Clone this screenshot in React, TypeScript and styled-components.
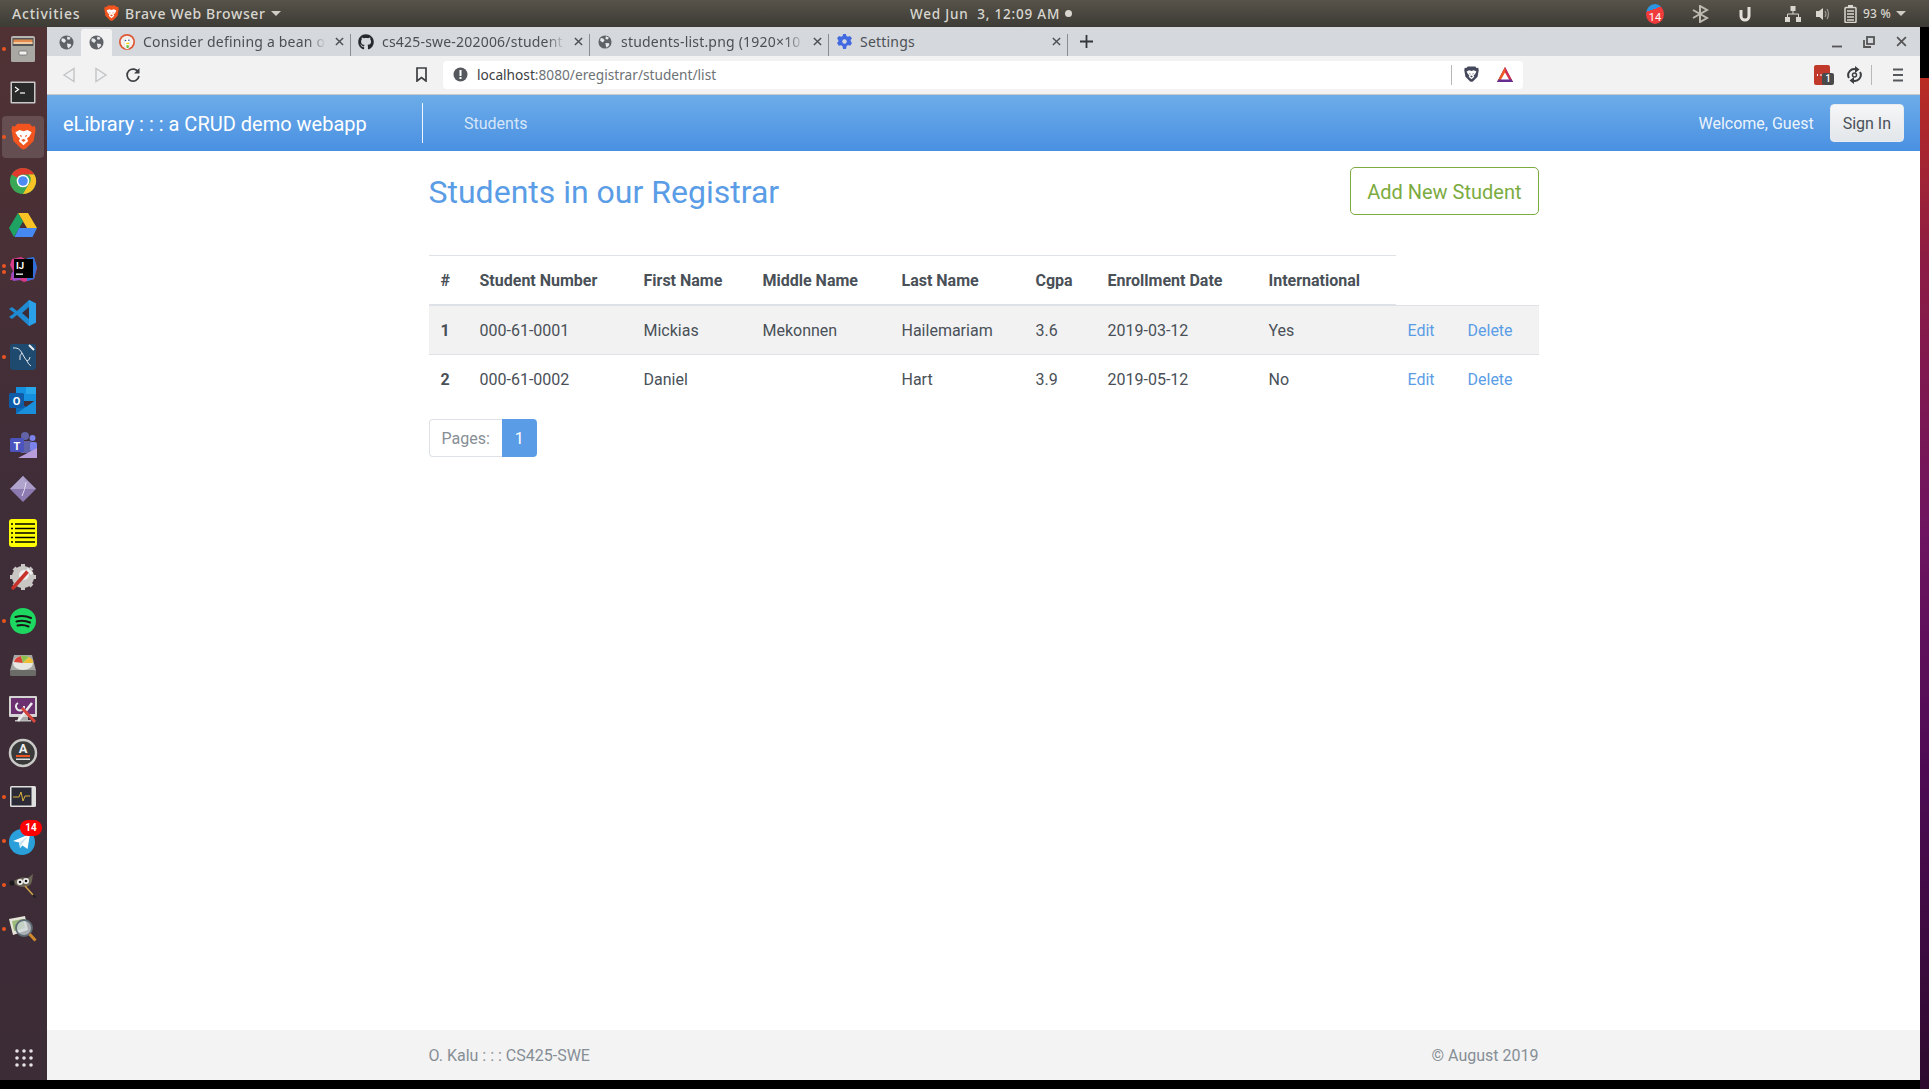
import React from "react";
import styled, { createGlobalStyle } from "styled-components";
import { FaGithub } from "react-icons/fa";

const Global = createGlobalStyle`
  html, body { margin: 0; padding: 0; height: 100%; background: #000; overflow: hidden; }
  #root { height: 100%; }
  * { box-sizing: border-box; }
`;

const ui = `"Noto Sans", "Open Sans", "DejaVu Sans", sans-serif`;
const web = `Roboto, "Liberation Sans", sans-serif`;

const Screen = styled.div`
  width: 1929px; height: 1089px; display: flex; flex-direction: column; background: #000;
`;
const TopBar = styled.header`
  height: 27px; flex: none; display: flex; align-items: center; position: relative;
  background: linear-gradient(#57534a, #3c3b35);
  font: 500 14px ${ui}; color: #d9d6cf; white-space: pre;
`;
const Activities = styled.span`
  margin-left: 12px; width: 92px; letter-spacing: .8px;
`;
const AppMenu = styled.div`
  display: flex; align-items: center; gap: 6px; width: 173px; flex: none; letter-spacing: .6px;
  svg { flex: none; }
`;
const Caret = styled.i<{ $gap?: number }>`
  width: 0; height: 0; flex: none; border-left: 5px solid transparent; border-right: 5px solid transparent;
  border-top: 5px solid #cfccc5; display: block; margin-left: ${p => p.$gap ?? 0}px;
`;
const Clock = styled.div`
  display: flex; align-items: center; gap: 5px; margin-left: 633px; font-size: 13.5px;
  letter-spacing: .8px;
`;
const StatusDot = styled.i`
  width: 7px; height: 7px; border-radius: 50%; background: #d9d6cf; display: block;
`;
const Tray = styled.div`
  display: flex; align-items: center; margin-left: auto; padding-right: 23px;
`;
const TrayCell = styled.span<{ $w: number }>`
  width: ${p => p.$w}px; display: flex; justify-content: center; align-items: center;
`;
const Battery = styled.span`
  font-size: 12px; width: 34px; letter-spacing: .2px; white-space: nowrap; padding-left: 4px;
`;
const TrayBadge = styled.span`
  width: 18px; height: 20px; display: flex; align-items: flex-end; justify-content: center;
  border-radius: 50%; background: linear-gradient(160deg, #2b95e0 30%, #ef3b3b 30%);
  color: #fff; font: 400 11px ${web};
`;

const Below = styled.div`
  flex: 1; min-height: 0; display: flex;
`;
const LeftColumn = styled.div`
  flex: 1; min-width: 0; display: flex; flex-direction: column;
`;
const Desktop = styled.div`
  flex: 1; min-height: 0; display: flex;
`;
const Band = styled.div`
  height: 9px; flex: none; background: #000;
`;
const Strip = styled.div`
  width: 9px; flex: none; display: flex; flex-direction: column;
`;
const StripBlack = styled.div`
  height: 51px; background: #000;
`;
const Wallpaper = styled.div`
  flex: 1; background: linear-gradient(#b92c23 0%, #8c1c44 18%, #6e1460 45%, #4e0b54 68%, #2e0a2e 100%);
`;

const Dock = styled.nav`
  width: 47px; flex: none; display: flex; flex-direction: column;
  background: linear-gradient(#503234, #3f2d38 45%, #3c2c36);
`;
const DockItem = styled.div<{ $active?: boolean }>`
  height: 44px; flex: none; position: relative; display: flex; align-items: center; justify-content: center;
  padding-right: 1px;
  &::before {
    content: ""; position: absolute; left: 2px; right: 3px; top: 1px; bottom: 1px; border-radius: 4px;
    background: ${p => (p.$active ? "rgba(255,255,255,.14)" : "transparent")};
  }
  svg { position: relative; }
`;
const Pips = styled.div`
  position: absolute; left: 2px; top: 0; bottom: 0; display: flex; flex-direction: column;
  justify-content: center; gap: 2px;
  i { width: 4px; height: 4px; border-radius: 50%; background: #e95420; display: block; }
`;
const DockBadge = styled.span`
  position: absolute; top: 1px; left: 20px; width: 22px; height: 16px; border-radius: 8px; background: #f00;
  color: #fff; font: 700 10px/16px ${web}; text-align: center;
`;
const AppsButton = styled.div`
  margin-top: auto; height: 44px; flex: none; display: flex; align-items: center; justify-content: center;
`;

const Browser = styled.div`
  flex: 1; min-width: 0; display: flex; flex-direction: column; background: #fff;
`;
const TabStrip = styled.div`
  height: 29px; flex: none; background: #d5d8dc; display: flex; align-items: stretch;
`;
const PinnedTab = styled.div<{ $active?: boolean }>`
  width: ${p => (p.$active ? 31 : 34)}px; display: flex; align-items: center; justify-content: center;
  padding-left: ${p => (p.$active ? 0 : 4)}px;
  background: ${p => (p.$active ? "#f2f2f2" : "transparent")};
  border-radius: 3px 3px 0 0; margin-top: 2px;
`;
const Tab = styled.div`
  width: 239px; display: flex; align-items: center; padding: 0 5px 0 6px; position: relative;
  font: 400 14px ${ui}; color: #4b5056; letter-spacing: .2px;
  &::after { content: ""; position: absolute; right: 0; top: 7px; bottom: 0; width: 1px; background: #8a8d91; }
`;
const TabIcon = styled.span`
  width: 18px; height: 18px; display: flex; align-items: center; justify-content: center; flex: none;
`;
const TabTitle = styled.span`
  margin-left: 7px; flex: 1; white-space: nowrap;
  -webkit-mask-image: linear-gradient(90deg, #000 90%, transparent 100%);
  mask-image: linear-gradient(90deg, #000 90%, transparent 100%);
`;
const PlainTitle = styled.span`
  margin-left: 7px; flex: 1; white-space: nowrap;
`;
const CloseGlyph = styled.span`
  width: 14px; display: flex; justify-content: center; margin-left: 6px; margin-right: 0;
`;
const NewTab = styled.div`
  width: 36px; display: flex; align-items: center; justify-content: center;
`;
const WindowControls = styled.div`
  margin-left: auto; display: flex; align-items: center; padding-right: 3px;
`;
const WindowBtn = styled.span`
  width: 32px; display: flex; justify-content: center;
`;

const Toolbar = styled.div`
  height: 39px; flex: none; background: #f2f2f2; border-bottom: 1px solid #c9c9c9; display: flex;
  align-items: center; padding-bottom: 1px;
`;
const ToolBtn = styled.span<{ $w?: number }>`
  width: ${p => p.$w ?? 32}px; display: flex; justify-content: center; flex: none;
`;
const Lead = styled.span`
  width: 6px; flex: none;
`;
const ToolSpacer = styled.span`
  width: 261px; flex: none;
`;
const AddressBar = styled.div`
  width: 1080px; height: 28px; margin-left: 11px; background: #fff; border-radius: 4px; display: flex; align-items: center;
  padding: 0 3px 0 10px; font: 400 13.7px ${ui}; color: #3c4043; flex: none;
`;
const Host = styled.span`
  margin-left: 9px; color: #3c4043;
`;
const Muted = styled.span`
  color: #6d7276;
`;
const AddressEnd = styled.div`
  margin-left: auto; display: flex; align-items: center;
`;
const VRule = styled.span<{ $after?: number }>`
  width: 1px; height: 20px; background: #b8b8b8; display: block; margin-right: ${p => p.$after ?? 0}px;
`;
const ExtArea = styled.div`
  margin-left: auto; display: flex; align-items: center; padding-right: 1px;
`;
const ExtBadgeWrap = styled.span`
  position: relative; width: 33px; display: flex; justify-content: center;
`;
const ExtCount = styled.span`
  position: absolute; left: 17px; top: 8px; width: 12px; height: 12px; border-radius: 2px;
  background: #4a4a4a; color: #fff; font: 500 10px/12px ${web}; text-align: center;
`;

const NavBar = styled.div`
  height: 56px; flex: none; display: flex; align-items: center; padding: 0 16px;
  background: linear-gradient(#6cace9, #4a90e2); font-family: ${web};
`;
const Brand = styled.span`
  font-size: 20px; color: #fff; width: 359px; white-space: nowrap; padding-top: 2px;
`;
const NavDivider = styled.span`
  width: 1px; height: 40px; background: rgba(255,255,255,.9); display: block;
`;
const NavLink = styled.span`
  margin-left: 41px; font-size: 16px; color: rgba(255,255,255,.75);
`;
const Welcome = styled.span`
  margin-left: auto; font-size: 16px; color: rgba(255,255,255,.9);
`;
const SignIn = styled.span`
  margin-left: 16px; height: 38px; padding: 0 12px; display: flex; align-items: center; font-size: 16px;
  color: #495057; border-radius: 4px; border: 1px solid #e9ecef;
  background: linear-gradient(#f5f6f7, #e3e6ea);
`;

const Main = styled.main`
  flex: 1; min-height: 0; font-family: ${web}; color: #495057; font-size: 16px;
`;
const Container = styled.div`
  width: 1110px; margin: 0 0 0 381.5px;
`;
const TitleRow = styled.div`
  display: flex; align-items: center; justify-content: space-between; padding-top: 16px; margin-bottom: 40px;
`;
const Title = styled.h1`
  margin: 0; padding-top: 2px; font: 400 32px/1.2 ${web}; color: #5a9de6;
`;
const AddButton = styled.span`
  height: 48px; padding: 2px 16px 0; display: flex; align-items: center; border: 1px solid #7cab3f; border-radius: 5px;
  color: #7cab3f; font-size: 20px;
`;
const Table = styled.table`
  width: 1110px; table-layout: fixed; border-collapse: collapse; margin-bottom: 16px;
`;
const Th = styled.th`
  padding: 13px 12px 11px; border-top: 1px solid #dee2e6; border-bottom: 2px solid #dee2e6; text-align: left;
  font-weight: 700; line-height: 24px;
`;
const Row = styled.tr<{ $shaded?: boolean }>`
  background: ${p => (p.$shaded ? "#f2f2f3" : "transparent")};
`;
const Td = styled.td`
  padding: 13px 12px 11px; border-top: 1px solid #dee2e6; line-height: 24px; white-space: nowrap;
`;
const RowHead = styled(Td)`
  font-weight: 700;
`;
const ActionLink = styled.a`
  color: #5a9de6; text-decoration: none;
`;
const Pager = styled.div`
  display: flex; height: 38px;
`;
const PagerLabel = styled.span`
  padding: 0 12px; display: flex; align-items: center; color: #868e96; border: 1px solid #dee2e6;
  border-right: 0; border-radius: 4px 0 0 4px;
`;
const PagerCurrent = styled.span`
  width: 35px; display: flex; align-items: center; justify-content: center; color: #fff; background: #5a9de6; border-radius: 0 4px 4px 0;
`;
const Footer = styled.footer`
  height: 50px; flex: none; background: #f3f3f3; font: 400 16px ${web}; color: #868e96; display: flex; align-items: center;
`;
const FooterInner = styled(Container)`
  display: flex; justify-content: space-between;
`;

/* ---------- drawings ---------- */
const Globe = ({ c = "#5f6368", s = 15 }: { c?: string; s?: number }) => (
  <svg width={s} height={s} viewBox="0 0 16 16">
    <circle cx="8" cy="8" r="7.5" fill={c} />
    <path d="M3 3.5l3 .5 1.5 2-2 2.5-3-2zM9 1.5l3.5 1.5-1.5 2-2.5-.5zM8.5 9l4 .5.5 2-3 3-1-2z" fill="#e9eaec" />
  </svg>
);
const X = ({ c = "#4b5056", s = 9, w = 1.6 }: { c?: string; s?: number; w?: number }) => (
  <svg width={s} height={s} viewBox="0 0 10 10"><path d="M1 1l8 8M9 1L1 9" stroke={c} strokeWidth={w} fill="none" /></svg>
);
const Duck = () => (
  <svg width="16" height="16" viewBox="0 0 16 16">
    <circle cx="8" cy="8" r="8" fill="#de5833" /><circle cx="8" cy="8" r="6.3" fill="#f4f1ee" />
    <path d="M5 5q3-2.5 5.500 0l.5 3-1.500 7h-3L5.500 9z" fill="#fff" stroke="#c9c9c9" strokeWidth=".4" />
    <circle cx="6.500" cy="6.500" r=".8" fill="#2d4f8e" /><circle cx="9.800" cy="6.300" r=".7" fill="#2d4f8e" />
    <path d="M7 9l3-.6.300 1.600-3 .3z" fill="#fdd20a" /><path d="M7.500 11l2.500.4-.5 2.500-2 .1z" fill="#65bc46" />
  </svg>
);
const Gear = () => (
  <svg width="15" height="15" viewBox="0 0 16 16">
    <path d="M6.500 0h3l.5 2.200 1.700.8L13.800 2 16 4.500l-1.500 1.800.3 1.700L16 9.500 14 12.500l-2.200-.7-1.500 1L9.500 16h-3l-.7-3.100-1.600-1L2 12.500 0 9.500 1.500 8l-.2-1.700L0 4.500 2.200 2l2.100 1 1.700-.8z" fill="#4169e1" />
    <circle cx="8" cy="8" r="2.400" fill="#d5d8dc" />
  </svg>
);
const BraveMark = ({ s = 24, mono = false }: { s?: number; mono?: boolean }) => (
  <svg width={s} height={s * 1.12} viewBox="0 0 32 36">
    <path d="M8 1h16l3 3.500 3.500-.5L31.500 9 29 23 19.500 32.500Q16 35.500 12.500 32.500L3 23 .5 9l1-5 3.500.5z" fill={mono ? "#44485a" : "#f2541f"} />
    <path d="M5.500 12L11 9l5 1.500L21 9l5.500 3-3 5.500-3 2.500 1.500 3-6 5.500-6-5.500 1.500-3-3-2.500z" fill="#fff" />
    <path d="M11 15l3 1.500-1 2zM21 15l-3 1.500 1 2zM13 22l3-1.500 3 1.500-3 2.500z" fill={mono ? "#44485a" : "#f2541f"} />
  </svg>
);
const BatTriangle = () => (
  <svg width="18" height="18" viewBox="0 0 18 18">
    <path d="M9 1L1 16h16z" fill="#662d91" /><path d="M9 1L1 16h4L9 8z" fill="#f15a22" /><path d="M9 1l8 15h-4L9 8z" fill="#d6304c" />
    <path d="M9 6.500L4.500 14.500h9z" fill="#fff" /><path d="M1 16h16l-1.500-2.500h-13z" fill="#662d91" />
  </svg>
);

const I = ({ children }: { children: React.ReactNode }) => <svg width="30" height="30" viewBox="0 0 30 30">{children}</svg>;

const Files = () => (<I>
  <rect x="3" y="2" width="24" height="26" rx="2" fill="#b8b6b1" />
  <rect x="4.500" y="4" width="21" height="8" fill="#555" /><rect x="5.500" y="5.500" width="19" height="4" fill="#e38a4f" />
  <rect x="5.500" y="8" width="19" height="2" fill="#f0c9a0" />
  <rect x="3" y="12" width="24" height="16" rx="2" fill="#a9a8a3" /><rect x="11" y="17" width="8" height="4" rx="1" fill="#f0f0ee" stroke="#666" strokeWidth=".7" />
</I>);
const Terminal = () => (<I>
  <rect x="2.500" y="3.500" width="25" height="22" rx="1" fill="#c9c9c9" /><rect x="4" y="5" width="22" height="19" fill="#2a2a2a" />
  <path d="M7 9l3.500 2.500L7 14" stroke="#fff" strokeWidth="1.200" fill="none" /><path d="M12 15h5" stroke="#fff" strokeWidth="1.200" />
</I>);
const Chrome = () => (<I>
  <circle cx="15" cy="15" r="13" fill="#3aa757" />
  <path d="M15 2a13 13 0 0 1 11.300 6.500H15a6.500 6.500 0 0 0-5.700 3.300L3.700 8.500A13 13 0 0 1 15 2z" fill="#e2392d" />
  <path d="M26.300 8.500A13 13 0 0 1 15 28l5.700-9.800a6.500 6.500 0 0 0-.1-9.700z" fill="#f7c325" />
  <circle cx="15" cy="15" r="6.300" fill="#fff" /><circle cx="15" cy="15" r="4.800" fill="#4c8bf5" />
</I>);
const Drive = () => (<I>
  <path d="M10 3h10l9 15h-10z" fill="#f7c325" /><path d="M10 3L1 18l5 9 9-15.500z" fill="#1ea362" /><path d="M6.500 27h18L29 18H11z" fill="#4688f1" />
</I>);
const Idea = () => (<I>
  <path d="M4 5l9-2 6 3 7-2 3 10-3 11-10 3-6-3-8 1 3-9-3-6z" fill="#d83a8a" />
  <path d="M19 4l7-1 3 10-3 12-7 2z" fill="#2f6fd6" /><path d="M3 20l5-6 5 12-8 1z" fill="#9b4bc8" />
  <rect x="6" y="5" width="19" height="19" fill="#000" />
  <text x="8" y="15" fontFamily="Roboto, sans-serif" fontSize="9.500" fontWeight="700" fill="#fff">IJ</text>
  <rect x="8" y="19.500" width="7" height="1.300" fill="#fff" />
</I>);
const VSCode = () => (<I>
  <path d="M21 2l7 3.500v19L21 28 9 17l-5 4-3-2 5.500-4L1 11l3-2 5 4z" fill="#1f8ad2" />
  <path d="M21 2l7 3.500v19L21 28z" fill="#2aa0e8" /><path d="M21 9l-7 6 7 6z" fill="#3c2c36" />
</I>);
const MySql = () => (<I>
  <rect x="2" y="2" width="26" height="26" rx="3" fill="#1f4a70" />
  <path d="M5 6q6-1 9 5t5 8q1 3 4 5M14 11q-3 2-2 7M19 19q3-1 3-4" stroke="#dfe7ee" strokeWidth="1" fill="none" />
  <path d="M21 3l5 5" stroke="#f2f2f2" strokeWidth="2" />
</I>);
const Outlook = () => (<I>
  <rect x="8" y="1" width="20" height="14" fill="#1490df" /><rect x="18" y="1" width="10" height="7" fill="#28a8ea" />
  <path d="M8 14l10 7 10-7v14H8z" fill="#0a6cb8" /><path d="M8 28l20-14v14z" fill="#1a8fdc" />
  <rect x="1" y="7" width="15" height="15" rx="1.500" fill="#0e5ca8" />
  <text x="8.500" y="18.500" textAnchor="middle" fontFamily="Roboto, sans-serif" fontWeight="700" fontSize="11" fill="#fff">O</text>
</I>);
const Teams = () => (<I>
  <circle cx="17" cy="6" r="4" fill="#6264a7" /><circle cx="24.500" cy="8" r="3" fill="#7b83eb" />
  <rect x="12" y="11" width="12" height="12" rx="2" fill="#6264a7" /><rect x="22" y="12" width="7" height="9" rx="2" fill="#7b83eb" />
  <rect x="2" y="8" width="14" height="14" rx="1.500" fill="#4b53bc" />
  <text x="9" y="19.500" textAnchor="middle" fontFamily="Roboto, sans-serif" fontWeight="700" fontSize="11" fill="#fff">T</text>
  <path d="M10 28l19-10v10z" fill="#b89ddb" />
</I>);
const Diamond = () => (<I>
  <path d="M15 2l13 13-13 13L2 15z" fill="#8c7ab0" /><path d="M15 2l13 13H15z" fill="#a99ac8" /><path d="M2 15h13l2-6-2-7z" fill="#b0a4cc" />
  <path d="M18 8q-1 8-4 14" stroke="#e7e2f0" strokeWidth="1" fill="none" />
</I>);
const Notes = () => (<I>
  <rect x="1" y="1" width="28" height="28" rx="3" fill="#ffff00" />
  <path d="M7 6h20M7 10.500h20M7 15h20M7 19.500h20M7 24h20" stroke="#000" strokeWidth="1.500" />
  <path d="M3 6h2M3 10.500h2M3 15h2M3 19.500h2M3 24h2" stroke="#000" strokeWidth="1.500" />
</I>);
const Tweak = () => (<I>
  <circle cx="15" cy="15" r="11" fill="#c9c7c3" />
  <path d="M15 2v26M2 15h26M6 6l18 18M24 6L6 24" stroke="#c9c7c3" strokeWidth="4" />
  <circle cx="16" cy="13" r="5" fill="#eee" />
  <path d="M5 26L20 9" stroke="#c7322a" strokeWidth="3.500" strokeLinecap="round" />
  <path d="M19 7l5 5" stroke="#eee" strokeWidth="3" />
</I>);
const Spotify = () => (<I>
  <circle cx="15" cy="15" r="13" fill="#1ed760" />
  <path d="M7.500 11q8-2.500 15.500 1M8.500 15.500q7-2 13.500 1M9.500 19.500q5.500-1.500 11 1" stroke="#191414" strokeWidth="2" strokeLinecap="round" fill="none" />
</I>);
const Disk = () => (<I>
  <path d="M6 5h18l4 16H2z" fill="#a7a7a3" /><rect x="2" y="20" width="26" height="6" rx="1.500" fill="#6b6b68" />
  <ellipse cx="15" cy="13" rx="10" ry="7" fill="#e6e6e3" />
  <path d="M15 13L6 12a10 7 0 0 1 7-6z" fill="#d8443a" /><path d="M15 13l-2-7a10 7 0 0 1 8 1z" fill="#8ec04e" /><path d="M15 13l6-6a10 7 0 0 1 4 6z" fill="#efbf3a" />
</I>);
const Monitor = () => (<I>
  <rect x="1" y="2" width="28" height="21" rx="1" fill="#d4d4d2" /><rect x="3" y="4" width="24" height="16" fill="#6c2f70" />
  <rect x="10" y="23" width="10" height="3" fill="#aaa" /><rect x="7" y="26" width="16" height="1.500" fill="#bbb" />
  <path d="M10 9a4 4 0 1 0 6 3" stroke="#e9e9e9" strokeWidth="2" fill="none" />
  <path d="M10 27L24 9" stroke="#eee" strokeWidth="2.500" /><path d="M14 14l13 14" stroke="#d7463d" strokeWidth="3" />
</I>);
const Updater = () => (<I>
  <circle cx="15" cy="15" r="13" fill="#3a3a3a" stroke="#c9c9c7" strokeWidth="2.500" />
  <text x="15" y="15" textAnchor="middle" fontFamily="Roboto, sans-serif" fontWeight="700" fontSize="13" fill="#eee">A</text>
  <rect x="8" y="17" width="14" height="2" fill="#e95420" /><rect x="8" y="20.500" width="14" height="1.500" fill="#ddd" />
</I>);
const SysMon = () => (<I>
  <rect x="2" y="4" width="26" height="21" rx="1.500" fill="#e0e0de" /><rect x="3.500" y="5.500" width="20" height="18" fill="#2c2a37" />
  <path d="M5 15h6l2-5 2 9 2-5h5" stroke="#d9b23c" strokeWidth="1" fill="none" />
</I>);
const Telegram = () => (<I>
  <circle cx="14" cy="16" r="13" fill="#2a9fd9" />
  <path d="M5 15l17-7-2.500 15-5-3.500-2.500 2.500-1-5.500z" fill="#fff" /><path d="M11 16.500l9-6.500-6 8-1.500 4z" fill="#cde5f3" />
</I>);
const Gimp = () => (<I>
  <path d="M5 12q6-6 15-4l5-4-1 7q-1 6-9 6-6 0-10-5z" fill="#6b6555" />
  <circle cx="12" cy="12" r="3" fill="#eee" /><circle cx="18" cy="11" r="3" fill="#eee" /><circle cx="12" cy="12" r="1.300" fill="#111" /><circle cx="18" cy="11" r="1.300" fill="#111" />
  <circle cx="4" cy="13" r="2.500" fill="#1a1a1a" /><path d="M17 16l8 9" stroke="#d1a24a" strokeWidth="1.500" /><path d="M25 25l2.500 2.500" stroke="#222" strokeWidth="2" />
</I>);
const Viewer = () => (<I>
  <path d="M1 5l16-3 3 14-15 5z" fill="#e7e5da" /><path d="M4 7l11-2 2 9-11 3z" fill="#9dbb7a" />
  <circle cx="16" cy="14" r="8" fill="#cfd8dc" stroke="#5d6b75" strokeWidth="1.800" fillOpacity=".75" />
  <path d="M21.500 20l6 6.500" stroke="#d08a2d" strokeWidth="3" />
</I>);
const Dots = () => (
  <svg width="18" height="18" viewBox="0 0 18 18" fill="#e6e3e4">
    {[2, 9, 16].flatMap(y => [2, 9, 16].map(x => <circle key={`${x}-${y}`} cx={x} cy={y} r="1.800" />))}
  </svg>
);

const docks: { icon: React.ReactNode; pips?: number; active?: boolean; badge?: string }[] = [
  { icon: <Files />, pips: 1 }, { icon: <Terminal /> },
  { icon: <BraveMark s={25} />, pips: 1, active: true }, { icon: <Chrome /> }, { icon: <Drive /> },
  { icon: <Idea />, pips: 2 }, { icon: <VSCode /> }, { icon: <MySql />, pips: 1 }, { icon: <Outlook /> },
  { icon: <Teams /> }, { icon: <Diamond /> }, { icon: <Notes /> }, { icon: <Tweak /> },
  { icon: <Spotify />, pips: 1 }, { icon: <Disk /> }, { icon: <Monitor /> }, { icon: <Updater /> },
  { icon: <SysMon />, pips: 1 }, { icon: <Telegram />, pips: 1, badge: "14" }, { icon: <Gimp />, pips: 1 }, { icon: <Viewer />, pips: 1 },
];

const students = [
  { n: 1, num: "000-61-0001", first: "Mickias", mid: "Mekonnen", last: "Hailemariam", cgpa: "3.6", date: "2019-03-12", intl: "Yes" },
  { n: 2, num: "000-61-0002", first: "Daniel", mid: "", last: "Hart", cgpa: "3.9", date: "2019-05-12", intl: "No" },
];
const heads = ["#", "Student Number", "First Name", "Middle Name", "Last Name", "Cgpa", "Enrollment Date", "International"];
const colWidths = [39, 164, 119, 139, 134, 72, 161, 139, 60, 83];

const tabs = [
  { icon: <Duck />, title: "Consider defining a bean o" },
  { icon: <FaGithub size={16} color="#24292e" />, title: "cs425-swe-202006/student" },
  { icon: <Globe s={14} />, title: "students-list.png (1920×10" },
];

export default function App() {
  return (
    <Screen>
      <Global />
      <TopBar>
        <Activities>Activities</Activities>
        <AppMenu><BraveMark s={15} />Brave Web Browser<Caret /></AppMenu>
        <Clock>Wed Jun  3, 12:09 AM<StatusDot /></Clock>
        <Tray>
          <TrayCell $w={72}><TrayBadge>14</TrayBadge></TrayCell>
          <TrayCell $w={18}>
            <svg width="18" height="18" viewBox="0 0 18 18"><path d="M2 5l14 8-7 4V1l7 4-14 8" stroke="#bdbab2" strokeWidth="2" fill="none" /></svg>
          </TrayCell>
          <TrayCell $w={72}>
            <svg width="14" height="16" viewBox="0 0 14 16"><path d="M3 4v6a4 4 0 0 0 8 0V1" stroke="#e3e0d9" strokeWidth="3" fill="none" /></svg>
          </TrayCell>
          <TrayCell $w={24}>
            <svg width="16" height="16" viewBox="0 0 16 16" fill="#d9d6cf"><rect x="5.500" y="0" width="5" height="5" /><rect x="0" y="11" width="5" height="5" /><rect x="11" y="11" width="5" height="5" /><path d="M8 5v3M2.500 11V8h11v3" stroke="#d9d6cf" fill="none" /></svg>
          </TrayCell>
          <TrayCell $w={36}>
            <svg width="16" height="16" viewBox="0 0 16 16"><path d="M1 5h3l4-3v12l-3.500-3H1z" fill="#d9d6cf" /><path d="M10 5q2 3 0 6M12 3q3 5 0 10" stroke="#9d9a93" strokeWidth="1.200" fill="none" /></svg>
          </TrayCell>
          <TrayCell $w={18}>
            <svg width="13" height="18" viewBox="0 0 13 18"><rect x="1" y="2.500" width="11" height="15" rx="1" fill="none" stroke="#d9d6cf" strokeWidth="1.500" /><rect x="4" y="0" width="5" height="2.500" fill="#d9d6cf" /><path d="M3 6h7M3 9h7M3 12h7M3 15h7" stroke="#d9d6cf" strokeWidth="1.500" /></svg>
          </TrayCell>
          <Battery>93 %</Battery>
          <Caret $gap={3} />
        </Tray>
      </TopBar>
      <Below>
        <LeftColumn>
          <Desktop>
            <Dock>
              {docks.map((d, i) => (
                <DockItem key={i} $active={d.active}>
                  {d.icon}
                  {d.pips ? <Pips>{Array.from({ length: d.pips }).map((_, k) => <i key={k} />)}</Pips> : null}
                  {d.badge ? <DockBadge>{d.badge}</DockBadge> : null}
                </DockItem>
              ))}
              <AppsButton><Dots /></AppsButton>
            </Dock>
            <Browser>
              <TabStrip>
                <PinnedTab><Globe /></PinnedTab>
                <PinnedTab $active><Globe /></PinnedTab>
                {tabs.map(t => (
                  <Tab key={t.title}>
                    <TabIcon>{t.icon}</TabIcon>
                    <TabTitle>{t.title}</TabTitle>
                    <CloseGlyph><X /></CloseGlyph>
                  </Tab>
                ))}
                <Tab>
                  <TabIcon><Gear /></TabIcon>
                  <PlainTitle>Settings</PlainTitle>
                  <CloseGlyph><X /></CloseGlyph>
                </Tab>
                <NewTab>
                  <svg width="13" height="13" viewBox="0 0 13 13"><path d="M6.500 0v13M0 6.500h13" stroke="#33373b" strokeWidth="1.800" /></svg>
                </NewTab>
                <WindowControls>
                  <WindowBtn><svg width="12" height="12" viewBox="0 0 12 12"><path d="M1 10.500h10" stroke="#555" strokeWidth="1.800" /></svg></WindowBtn>
                  <WindowBtn><svg width="12" height="12" viewBox="0 0 12 12" fill="none" stroke="#555" strokeWidth="1.800"><rect x="4" y="1" width="7" height="7" /><path d="M1 4v7h7" /></svg></WindowBtn>
                  <WindowBtn><X c="#555" s={11} w={1.600} /></WindowBtn>
                </WindowControls>
              </TabStrip>
              <Toolbar>
                <Lead />
                <ToolBtn>
                  <svg width="14" height="16" viewBox="0 0 14 16"><path d="M12 1.500v13L2 8z" fill="none" stroke="#c2c4c6" strokeWidth="1.400" /></svg>
                </ToolBtn>
                <ToolBtn>
                  <svg width="14" height="16" viewBox="0 0 14 16"><path d="M2 1.500v13L12 8z" fill="none" stroke="#c2c4c6" strokeWidth="1.400" /></svg>
                </ToolBtn>
                <ToolBtn>
                  <svg width="16" height="16" viewBox="0 0 16 16"><path d="M13.500 5.500A6 6 0 1 0 14 9" fill="none" stroke="#3c3f42" strokeWidth="1.700" /><path d="M14.500 1v5.500H9z" fill="#3c3f42" /></svg>
                </ToolBtn>
                <ToolSpacer />
                <ToolBtn $w={22}>
                  <svg width="11" height="15" viewBox="0 0 11 15"><path d="M1 1h9v13L5.500 10.500 1 14z" fill="none" stroke="#3c3f42" strokeWidth="1.700" /></svg>
                </ToolBtn>
                <AddressBar>
                  <svg width="15" height="15" viewBox="0 0 15 15"><circle cx="7.500" cy="7.500" r="7" fill="#55585c" /><rect x="6.500" y="3" width="2" height="6" fill="#fff" /><rect x="6.500" y="10" width="2" height="2" fill="#fff" /></svg>
                  <Host>localhost<Muted>:8080/eregistrar/student/list</Muted></Host>
                  <AddressEnd>
                    <VRule />
                    <ToolBtn $w={38}><BraveMark s={15} mono /></ToolBtn>
                    <ToolBtn $w={30}><BatTriangle /></ToolBtn>
                  </AddressEnd>
                </AddressBar>
                <ExtArea>
                  <ExtBadgeWrap>
                    <svg width="16" height="20" viewBox="0 0 16 20"><rect x="0" y="0" width="16" height="20" rx="2" fill="#c0392b" /><path d="M3 10h1M6.500 10h1M10 10h1" stroke="#fff" strokeWidth="2" /><path d="M13.500 8v4" stroke="#fff" /></svg>
                    <ExtCount>1</ExtCount>
                  </ExtBadgeWrap>
                  <ToolBtn $w={33}>
                    <svg width="17" height="18" viewBox="0 0 17 18" fill="none" stroke="#3c3f42" strokeWidth="2"><path d="M3 12A6 6 0 0 1 10.500 3.500" /><path d="M14 6A6 6 0 0 1 6.500 14.500" /><path d="M9 0l4.500 3.500L9 7zM8 11l-4.500 3.500L8 18z" fill="#3c3f42" stroke="none" /><circle cx="8.500" cy="9" r="2" strokeWidth="1.500" /></svg>
                  </ToolBtn>
                  <VRule $after={5} />
                  <ToolBtn $w={42}>
                    <svg width="12" height="14" viewBox="0 0 12 14"><path d="M1 1.500h10M1 7h10M1 12.500h10" stroke="#55585c" strokeWidth="1.800" /></svg>
                  </ToolBtn>
                </ExtArea>
              </Toolbar>
              <NavBar>
                <Brand>eLibrary : : : a CRUD demo webapp</Brand>
                <NavDivider />
                <NavLink>Students</NavLink>
                <Welcome>Welcome, Guest</Welcome>
                <SignIn>Sign In</SignIn>
              </NavBar>
              <Main>
                <Container>
                  <TitleRow>
                    <Title>Students in our Registrar</Title>
                    <AddButton>Add New Student</AddButton>
                  </TitleRow>
                  <Table>
                    <colgroup>{colWidths.map((w, i) => <col key={i} style={{ width: w }} />)}</colgroup>
                    <thead><tr>{heads.map(h => <Th key={h}>{h}</Th>)}</tr></thead>
                    <tbody>
                      {students.map((s, i) => (
                        <Row key={s.n} $shaded={i === 0}>
                          <RowHead>{s.n}</RowHead>
                          <Td>{s.num}</Td><Td>{s.first}</Td><Td>{s.mid}</Td><Td>{s.last}</Td>
                          <Td>{s.cgpa}</Td><Td>{s.date}</Td><Td>{s.intl}</Td>
                          <Td><ActionLink>Edit</ActionLink></Td>
                          <Td><ActionLink>Delete</ActionLink></Td>
                        </Row>
                      ))}
                    </tbody>
                  </Table>
                  <Pager><PagerLabel>Pages:</PagerLabel><PagerCurrent>1</PagerCurrent></Pager>
                </Container>
              </Main>
              <Footer>
                <FooterInner>
                  <span>O. Kalu : : : CS425-SWE</span>
                  <span>© August 2019</span>
                </FooterInner>
              </Footer>
            </Browser>
          </Desktop>
          <Band />
        </LeftColumn>
        <Strip><StripBlack /><Wallpaper /></Strip>
      </Below>
    </Screen>
  );
}
